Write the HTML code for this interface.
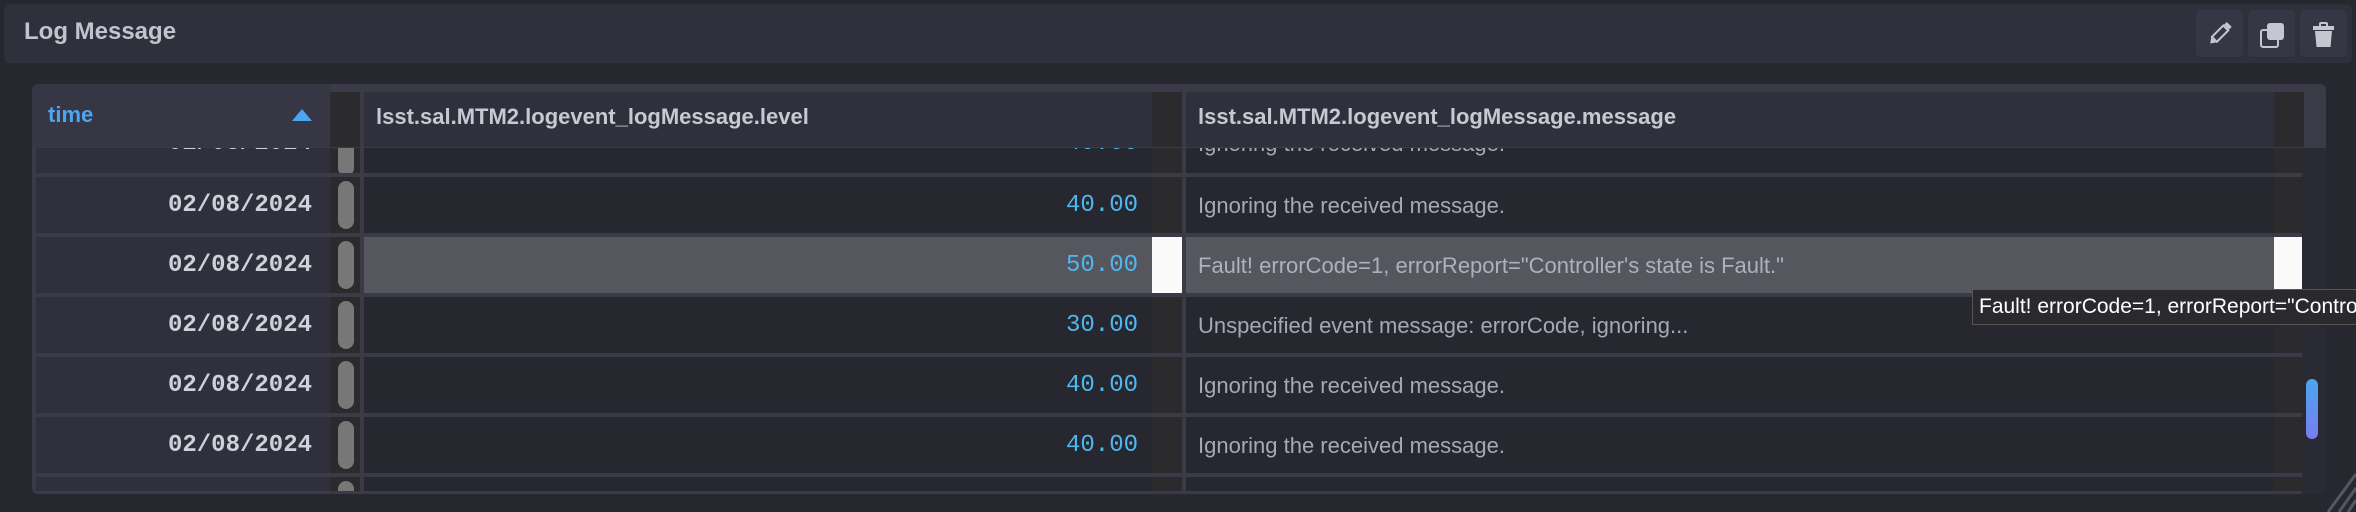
<!DOCTYPE html>
<html><head><meta charset="utf-8"><style>
*{margin:0;padding:0;box-sizing:border-box}
body{width:2356px;height:512px;background:#27272f;position:relative;overflow:hidden;font-family:"Liberation Sans",sans-serif}
.abs{position:absolute}
.hdr{left:4px;top:4px;width:2348px;height:59px;background:#30303c;border-radius:6px}
.title{left:24px;top:18px;font-size:24px;color:#c3c3cd;font-weight:bold}
.btn{top:10px;width:47px;height:47px;background:#363644;border-radius:5px}
.table{left:32px;top:84px;width:2294px;height:410px;background:#3a3b47;border-radius:6px;overflow:hidden}
.cell{position:absolute;overflow:hidden;white-space:nowrap}
.mono{font-family:"Liberation Mono","DejaVu Sans Mono",monospace;font-weight:bold}
.pill{position:absolute;left:8px;width:16px;background:#777;border-radius:8px}
</style></head><body>
<div class="abs hdr"></div>
<div class="abs title">Log Message</div>
<div class="abs btn" style="left:2196px"><svg width="47" height="47"><g transform="rotate(45 23 24)"><rect x="20" y="10" width="7" height="4" fill="#c5c6d0"/><rect x="20" y="15" width="7" height="16" fill="none" stroke="#c5c6d0" stroke-width="2"/><path d="M20 32 L23.5 37 L27 32Z" fill="#c5c6d0"/></g></svg></div>
<div class="abs btn" style="left:2248px"><svg width="47" height="47"><rect x="13" y="20" width="17" height="17" rx="2" fill="none" stroke="#c5c6d0" stroke-width="2"/><rect x="19" y="13" width="17" height="17" rx="3" fill="#c5c6d0"/></svg></div>
<div class="abs btn" style="left:2300px"><svg width="47" height="47"><rect x="20" y="13" width="7" height="4" rx="1" fill="none" stroke="#c5c6d0" stroke-width="2"/><rect x="13" y="16" width="21" height="4" fill="#c5c6d0"/><path d="M15 21 H32 L30.5 37 H16.5Z" fill="#c5c6d0"/></svg></div>

<div class="abs table">
<div class="cell" style="left:0;top:0;width:298px;height:63px;background:#363644"></div>
<div class="cell" style="left:16px;top:18px;font-size:22px;font-weight:bold;color:#4aa6f0">time</div>
<svg class="abs" style="left:260px;top:24px" width="20" height="14"><path d="M0 13 L10 1 L20 13Z" fill="#4aa6f0"/></svg>
<div class="cell" style="left:298px;top:8px;width:30px;height:55px;background:#2b2b2e"></div>
<div class="cell" style="left:332px;top:8px;width:788px;height:55px;background:#30303c"></div>
<div class="cell" style="left:344px;top:20px;font-size:22px;font-weight:bold;color:#c8c8d2">lsst.sal.MTM2.logevent_logMessage.level</div>
<div class="cell" style="left:1120px;top:8px;width:30px;height:55px;background:#2b2b2e"></div>
<div class="cell" style="left:1154px;top:8px;width:1088px;height:55px;background:#30303c"></div>
<div class="cell" style="left:1166px;top:20px;font-size:22px;font-weight:bold;color:#c8c8d2">lsst.sal.MTM2.logevent_logMessage.message</div>
<div class="cell" style="left:2242px;top:8px;width:30px;height:55px;background:#2b2b2e"></div>

<div id="rows"></div>
<div class="cell" style="left:2270px;top:64px;width:24px;height:346px;background:#2a2a34"></div>
<div class="cell" style="left:2274px;top:295px;width:12px;height:60px;border-radius:6px;background:linear-gradient(#4aa6f0,#7a7cf0)"></div>
</div>

<div class="abs" style="left:1972px;top:289px;width:384px;height:36px;background:#2a2a2e;border:1px solid #555;border-right:none;color:#fff;font-size:21px;padding:5px 6px;white-space:nowrap;overflow:hidden">Fault! errorCode=1, errorReport="Controller's state is Fault."</div>
<svg class="abs" style="left:2320px;top:470px" width="36" height="42"><path d="M36 4 L8 42 M36 18 L19 42 M36 30 L28 42" stroke="#555662" stroke-width="3"/></svg>

<script>
var rows=[[64,25,"40.00","Ignoring the received message.",0,-33],[93,56,"40.00","Ignoring the received message.",0,0],[153,56,"50.00","Fault! errorCode=1, errorReport=\"Controller's state is Fault.\"",1,0],[213,56,"30.00","Unspecified event message: errorCode, ignoring...",0,0],[273,56,"40.00","Ignoring the received message.",0,0],[333,56,"40.00","Ignoring the received message.",0,0],[393,14,"","",0,0]];
var h="";
rows.forEach(function(r){
var t=r[0],ht=r[1],sel=r[4],off=r[5];
var bg=sel?"#55565e":"#272730";
h+='<div class="cell" style="left:4px;top:'+t+'px;width:294px;height:'+ht+'px;background:#30303c"><div class="mono" style="position:absolute;right:18px;top:'+(15+off)+'px;font-size:24px;color:#d0d0da">02/08/2024</div></div>';
h+='<div class="cell" style="left:298px;top:'+t+'px;width:30px;height:'+ht+'px;background:#2b2b2e"><div class="pill" style="top:'+(off<0?-20:4)+'px;height:'+(ht<20?30:48)+'px"></div></div>';
h+='<div class="cell" style="left:332px;top:'+t+'px;width:788px;height:'+ht+'px;background:'+bg+'"><div class="mono" style="position:absolute;right:14px;top:'+(15+off)+'px;font-size:24px;font-weight:normal;color:#4fb8f0">'+r[2]+'</div></div>';
h+='<div class="cell" style="left:1120px;top:'+t+'px;width:30px;height:'+ht+'px;background:'+(sel?"#fafafa":"#2b2b2e")+'"></div>';
h+='<div class="cell" style="left:1154px;top:'+t+'px;width:1088px;height:'+ht+'px;background:'+bg+'"><div style="position:absolute;left:12px;top:'+(16+off)+'px;font-size:22px;color:'+(sel?"#b0b0ba":"#a8a8b4")+'">'+r[3]+'</div></div>';
h+='<div class="cell" style="left:2242px;top:'+t+'px;width:28px;height:'+ht+'px;background:'+(sel?"#fafafa":"#2b2b2e")+'"></div>';
});
document.getElementById("rows").outerHTML=h;
</script>
</body></html>
